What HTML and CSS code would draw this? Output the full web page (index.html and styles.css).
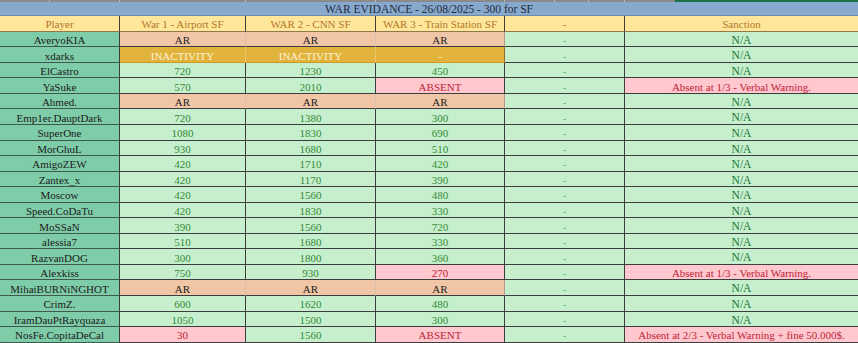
FILE: index.html
```html
<!DOCTYPE html>
<html>
<head>
<meta charset="utf-8">
<link rel="stylesheet" href="styles.css">
</head>
<body>
<div class="strip">
  <span class="seg s1"></span><span class="seg s2"></span><span class="seg s3"></span><span class="seg s4"></span><span class="seg s5"></span><span class="seg s6"></span><span class="seg s7"></span><span class="seg s8"></span><span class="seg sel"></span>
</div>
<div class="sheet">
  <div class="title">WAR EVIDANCE - 26/08/2025 - 300 for SF</div>

  <div class="hd">Player</div><div class="hd">War 1 - Airport SF</div><div class="hd">WAR 2 - CNN SF</div><div class="hd">WAR 3 - Train Station SF</div><div class="hd">-</div><div class="hd last">Sanction</div>

  <div class="pl">AveryoKIA</div><div class="ar">AR</div><div class="ar">AR</div><div class="ar end">AR</div><div class="dash">-</div><div class="na">N/A</div>
  <div class="pl">xdarks</div><div class="ina">INACTIVITY</div><div class="ina">INACTIVITY</div><div class="ina end">-</div><div class="dash">-</div><div class="na">N/A</div>
  <div class="pl">ElCastro</div><div class="num">720</div><div class="num">1230</div><div class="num">450</div><div class="dash">-</div><div class="na">N/A</div>
  <div class="pl">YaSuke</div><div class="num">570</div><div class="num">2010</div><div class="bad">ABSENT</div><div class="dash">-</div><div class="bad">Absent at 1/3 - Verbal Warning.</div>
  <div class="pl">Ahmed.</div><div class="ar">AR</div><div class="ar">AR</div><div class="ar end">AR</div><div class="dash">-</div><div class="na">N/A</div>
  <div class="pl">Emp1er.DauptDark</div><div class="num">720</div><div class="num">1380</div><div class="num">300</div><div class="dash">-</div><div class="na">N/A</div>
  <div class="pl">SuperOne</div><div class="num">1080</div><div class="num">1830</div><div class="num">690</div><div class="dash">-</div><div class="na">N/A</div>
  <div class="pl">MorGhuL</div><div class="num">930</div><div class="num">1680</div><div class="num">510</div><div class="dash">-</div><div class="na">N/A</div>
  <div class="pl">AmigoZEW</div><div class="num">420</div><div class="num">1710</div><div class="num">420</div><div class="dash">-</div><div class="na">N/A</div>
  <div class="pl">Zantex_x</div><div class="num">420</div><div class="num">1170</div><div class="num">390</div><div class="dash">-</div><div class="na">N/A</div>
  <div class="pl">Moscow</div><div class="num">420</div><div class="num">1560</div><div class="num">480</div><div class="dash">-</div><div class="na">N/A</div>
  <div class="pl">Speed.CoDaTu</div><div class="num">420</div><div class="num">1830</div><div class="num">330</div><div class="dash">-</div><div class="na">N/A</div>
  <div class="pl">MoSSaN</div><div class="num">390</div><div class="num">1560</div><div class="num">720</div><div class="dash">-</div><div class="na">N/A</div>
  <div class="pl">alessia7</div><div class="num">510</div><div class="num">1680</div><div class="num">330</div><div class="dash">-</div><div class="na">N/A</div>
  <div class="pl">RazvanDOG</div><div class="num">300</div><div class="num">1800</div><div class="num">360</div><div class="dash">-</div><div class="na">N/A</div>
  <div class="pl">Alexkiss</div><div class="num">750</div><div class="num">930</div><div class="bad">270</div><div class="dash">-</div><div class="bad">Absent at 1/3 - Verbal Warning.</div>
  <div class="pl">MihaiBURNiNGHOT</div><div class="ar">AR</div><div class="ar">AR</div><div class="ar end">AR</div><div class="dash">-</div><div class="na">N/A</div>
  <div class="pl">CrimZ.</div><div class="num">600</div><div class="num">1620</div><div class="num">480</div><div class="dash">-</div><div class="na">N/A</div>
  <div class="pl">IramDauPtRayquaza</div><div class="num">1050</div><div class="num">1500</div><div class="num">300</div><div class="dash">-</div><div class="na">N/A</div>
  <div class="pl">NosFe.CopitaDeCal</div><div class="bad">30</div><div class="num">1560</div><div class="bad">ABSENT</div><div class="dash">-</div><div class="bad">Absent at 2/3 - Verbal Warning + fine 50.000$.</div>
</div>
</body>
</html>
```

FILE: styles.css
```css
html, body {
  margin: 0;
  padding: 0;
  background: #ffffff;
}
body {
  width: 858px;
  height: 343px;
  overflow: hidden;
  font-family: "Liberation Serif", "Times New Roman", serif;
  font-size: 11px;
}
.strip {
  display: flex;
  height: 2px;
  background: #8a8a8a;
}
.seg {
  height: 2px;
  box-sizing: border-box;
  border-right: 1px solid #b8b8b8;
}
.s1 { width: 50px; }
.s2 { width: 70px; }
.s3 { width: 126px; }
.s4 { width: 130px; }
.s5 { width: 129px; }
.s6 { width: 50px; }
.s7 { width: 34px; }
.s8 { width: 36px; }
.sel {
  flex: 1;
  margin-left: 50px;
  background: #1e7145;
  border: none;
}
.sheet {
  display: grid;
  grid-template-columns: 120px 126px 130px 129px 120px 233px;
  grid-template-rows: 14px 15.7px;
  grid-auto-rows: 15.55px;
}
.sheet > div {
  box-sizing: border-box;
  display: flex;
  align-items: center;
  justify-content: center;
  padding-top: 3px;
  white-space: nowrap;
  overflow: hidden;
  line-height: 1;
  border-right: 1px solid #3d3d3d;
  border-bottom: 1px solid #3d3d3d;
}
.sheet > .title {
  grid-column: 1 / -1;
  padding-top: 2px;
  background: #88a9ce;
  color: #1d2a3a;
  font-size: 11.5px;
  border-right: none;
  border-bottom: 1px solid #6f8aa8;
}
.sheet > .hd {
  background: #ffe699;
  color: #b0782c;
  border-bottom: 1px solid #8c7a4c;
}
.sheet > .hd.last { border-right: none; }
.sheet > .pl {
  background: #7fcca9;
  color: #1b1b1b;
  border-bottom-color: #3e5a4e;
}
.sheet > .num {
  background: #c6efce;
  color: #358a35;
}
.sheet > .dash {
  background: #c6efce;
  color: #74b874;
}
.sheet > .na {
  background: #c6efce;
  color: #1a7530;
  font-size: 11.5px;
  border-right: none;
}
.sheet > .ar {
  background: #f0c6a6;
  color: #1e1e1e;
  border-right-color: #dcc1ad;
}
.sheet > .ar.end { border-right-color: #b89a84; }
.sheet > .ina {
  background: #e1b33c;
  color: #fff4d8;
  border-right-color: #e9c66a;
  border-bottom-color: #d19a28;
}
.sheet > .ina.end { border-right-color: #8a7030; }
.sheet > .bad {
  background: #ffc7ce;
  color: #bd2539;
}
.sheet > .bad:last-child,
.sheet > .dash + .bad {
  border-right: none;
}
```
